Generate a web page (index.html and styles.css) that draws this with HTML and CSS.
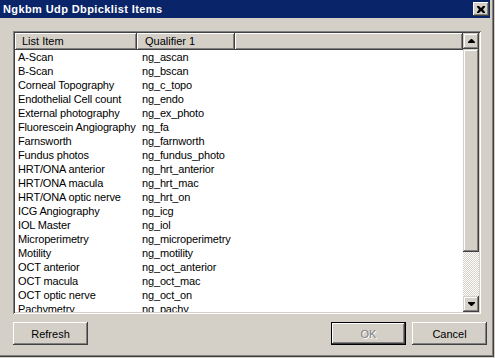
FILE: index.html
```html
<!DOCTYPE html>
<html lang="en">
<head>
    <meta charset="UTF-8" />
    <title>Ngkbm Udp Dbpicklist Items</title>
    <link rel="stylesheet" href="styles.css">
</head>
<body>
    <div class="ventana">
        <div class="titulo">
            <span class="titulo-texto">Ngkbm Udp Dbpicklist Items</span>
            <span class="cerrar">
                <svg width="8" height="7" viewBox="0 0 8 7"><path d="M0 0h2l2 2 2-2h2v1l-2 2.5 2 2.5v1h-2l-2-2-2 2h-2v-1l2-2.5-2-2.5z" fill="#000"/></svg>
            </span>
        </div>

        <div class="lista">
            <div class="lista-cuerpo">
                <div class="cabecera">
                    <div class="celda-cab col-item">List Item</div>
                    <div class="celda-cab col-qual">Qualifier 1</div>
                    <div class="celda-cab col-resto"></div>
                </div>
                <div class="fila"><span class="col-item">A-Scan</span><span class="col-qual">ng_ascan</span></div>
                <div class="fila"><span class="col-item">B-Scan</span><span class="col-qual">ng_bscan</span></div>
                <div class="fila"><span class="col-item">Corneal Topography</span><span class="col-qual">ng_c_topo</span></div>
                <div class="fila"><span class="col-item">Endothelial Cell count</span><span class="col-qual">ng_endo</span></div>
                <div class="fila"><span class="col-item">External photography</span><span class="col-qual">ng_ex_photo</span></div>
                <div class="fila"><span class="col-item">Fluorescein Angiography</span><span class="col-qual">ng_fa</span></div>
                <div class="fila"><span class="col-item">Farnsworth</span><span class="col-qual">ng_farnworth</span></div>
                <div class="fila"><span class="col-item">Fundus photos</span><span class="col-qual">ng_fundus_photo</span></div>
                <div class="fila"><span class="col-item">HRT/ONA anterior</span><span class="col-qual">ng_hrt_anterior</span></div>
                <div class="fila"><span class="col-item">HRT/ONA macula</span><span class="col-qual">ng_hrt_mac</span></div>
                <div class="fila"><span class="col-item">HRT/ONA optic nerve</span><span class="col-qual">ng_hrt_on</span></div>
                <div class="fila"><span class="col-item">ICG Angiography</span><span class="col-qual">ng_icg</span></div>
                <div class="fila"><span class="col-item">IOL Master</span><span class="col-qual">ng_iol</span></div>
                <div class="fila"><span class="col-item">Microperimetry</span><span class="col-qual">ng_microperimetry</span></div>
                <div class="fila"><span class="col-item">Motility</span><span class="col-qual">ng_motility</span></div>
                <div class="fila"><span class="col-item">OCT anterior</span><span class="col-qual">ng_oct_anterior</span></div>
                <div class="fila"><span class="col-item">OCT macula</span><span class="col-qual">ng_oct_mac</span></div>
                <div class="fila"><span class="col-item">OCT optic nerve</span><span class="col-qual">ng_oct_on</span></div>
                <div class="fila"><span class="col-item">Pachymetry</span><span class="col-qual">ng_pachy</span></div>
            </div>
            <div class="scroll">
                <span class="scroll-btn">
                    <svg width="7" height="4" viewBox="0 0 7 4"><path d="M3 0h1l3 3v1h-7v-1z" fill="#000"/></svg>
                </span>
                <span class="scroll-thumb"></span>
                <span class="scroll-pista"></span>
                <span class="scroll-btn">
                    <svg width="7" height="4" viewBox="0 0 7 4"><path d="M0 0h7v1l-3 3h-1l-3-3z" fill="#000"/></svg>
                </span>
            </div>
        </div>

        <div class="botones">
            <button type="button" class="boton">Refresh</button>
            <span class="espacio"></span>
            <button type="button" class="boton defecto" disabled>OK</button>
            <button type="button" class="boton">Cancel</button>
        </div>
    </div>
</body>
</html>
```

FILE: styles.css
```css
* {
    box-sizing: border-box;
}

body {
    margin: 0;
    padding: 0;
    background-color: #d4d0c8;
    font-family: "Liberation Sans", Arial, sans-serif;
    font-size: 11px;
    color: #000;
}

.ventana {
    width: 494px;
    height: 357px;
    background-color: #d4d0c8;
    padding-right: 4px;
    box-shadow: inset -1px -1px #404040, inset -2px -2px #808080;
    display: flex;
    flex-direction: column;
}

.titulo {
    height: 18px;
    background-color: #0a246a;
    display: flex;
    align-items: center;
    justify-content: space-between;
    padding: 0 1px 0 3px;
}
.titulo-texto {
    color: #fff;
    font-weight: bold;
    font-size: 11px;
    letter-spacing: 0.4px;
    line-height: 18px;
}
.cerrar {
    width: 16px;
    height: 14px;
    background-color: #d4d0c8;
    display: flex;
    align-items: center;
    justify-content: center;
    box-shadow: inset -1px -1px #404040, inset 1px 1px #fff, inset -2px -2px #808080;
}

.lista {
    margin: 13px 0 0 13px;
    width: 468px;
    height: 283px;
    padding: 2px;
    background-color: #fff;
    box-shadow: inset 1px 1px #808080, inset -1px -1px #fff, inset 2px 2px #404040, inset -2px -2px #d4d0c8;
    display: flex;
    overflow: hidden;
}
.lista-cuerpo {
    flex: 1;
    overflow: hidden;
}

.cabecera {
    display: flex;
    height: 17px;
}
.celda-cab {
    background-color: #d4d0c8;
    line-height: 16px;
    padding-left: 7px;
    box-shadow: inset -1px -1px #404040, inset 1px 1px #fff, inset -2px -2px #808080;
}
.col-item {
    width: 122px;
    flex: none;
}
.col-qual {
    width: 98px;
    flex: none;
}
.celda-cab.col-qual {
    padding-left: 8px;
}
.col-resto {
    flex: 1;
}

.fila {
    display: flex;
    height: 14px;
    line-height: 14px;
    white-space: nowrap;
    letter-spacing: -0.15px;
}
.fila .col-item {
    padding-left: 3px;
}
.fila .col-qual {
    padding-left: 5px;
}

.scroll {
    width: 16px;
    flex: none;
    display: flex;
    flex-direction: column;
}
.scroll-btn {
    height: 16px;
    background-color: #d4d0c8;
    display: flex;
    align-items: center;
    justify-content: center;
    box-shadow: inset -1px -1px #404040, inset 1px 1px #d4d0c8, inset -2px -2px #808080, inset 2px 2px #fff;
}
.scroll-thumb {
    height: 203px;
    background-color: #d4d0c8;
    box-shadow: inset -1px -1px #404040, inset 1px 1px #d4d0c8, inset -2px -2px #808080, inset 2px 2px #fff;
}
.scroll-pista {
    flex: 1;
    background: repeating-conic-gradient(#fff 0 25%, #d4d0c8 0 50%) 0 0 / 2px 2px;
}

.botones {
    display: flex;
    margin: 8px 0 0 13px;
    gap: 6px;
}
.espacio {
    flex: none;
    width: 231px;
}
.boton {
    width: 75px;
    height: 23px;
    border: none;
    padding: 0;
    background-color: #d4d0c8;
    font-family: "Liberation Sans", Arial, sans-serif;
    font-size: 11px;
    color: #000;
    box-shadow: inset -1px -1px #404040, inset 1px 1px #fff, inset -2px -2px #808080;
}
.defecto {
    box-shadow: inset 0 0 0 1px #000, inset -2px -2px #404040, inset 2px 2px #fff, inset -3px -3px #808080;
}
.boton:disabled {
    color: #808080;
    text-shadow: 1px 1px #fff;
}
```
